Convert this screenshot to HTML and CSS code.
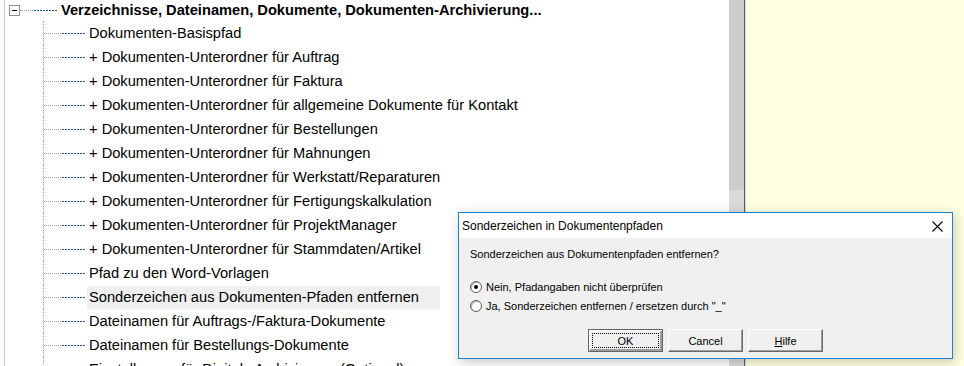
FILE: index.html
```html
<!DOCTYPE html>
<html lang="de">
<head>
    <meta charset="UTF-8">
    <title>Einstellungen</title>
    <link rel="stylesheet" href="styles.css">
</head>
<body>
    <div class="app">
        <div class="tree">
            <div class="head">
                <span class="toggle"></span>
                <span class="dots head-dots"></span>
                <span class="dash"></span>
                <span class="label bold">Verzeichnisse, Dateinamen, Dokumente, Dokumenten-Archivierung...</span>
            </div>
            <ul class="children">
                <li class="item"><span class="dots"></span><span class="dash"></span><span class="label">Dokumenten-Basispfad</span></li>
                <li class="item"><span class="dots"></span><span class="dash"></span><span class="label">+ Dokumenten-Unterordner für Auftrag</span></li>
                <li class="item"><span class="dots"></span><span class="dash"></span><span class="label">+ Dokumenten-Unterordner für Faktura</span></li>
                <li class="item"><span class="dots"></span><span class="dash"></span><span class="label">+ Dokumenten-Unterordner für allgemeine Dokumente für Kontakt</span></li>
                <li class="item"><span class="dots"></span><span class="dash"></span><span class="label">+ Dokumenten-Unterordner für Bestellungen</span></li>
                <li class="item"><span class="dots"></span><span class="dash"></span><span class="label">+ Dokumenten-Unterordner für Mahnungen</span></li>
                <li class="item"><span class="dots"></span><span class="dash"></span><span class="label">+ Dokumenten-Unterordner für Werkstatt/Reparaturen</span></li>
                <li class="item"><span class="dots"></span><span class="dash"></span><span class="label">+ Dokumenten-Unterordner für Fertigungskalkulation</span></li>
                <li class="item"><span class="dots"></span><span class="dash"></span><span class="label">+ Dokumenten-Unterordner für ProjektManager</span></li>
                <li class="item"><span class="dots"></span><span class="dash"></span><span class="label">+ Dokumenten-Unterordner für Stammdaten/Artikel</span></li>
                <li class="item"><span class="dots"></span><span class="dash"></span><span class="label">Pfad zu den Word-Vorlagen</span></li>
                <li class="item"><span class="dots"></span><span class="dash"></span><span class="label selected">Sonderzeichen aus Dokumenten-Pfaden entfernen</span></li>
                <li class="item"><span class="dots"></span><span class="dash"></span><span class="label">Dateinamen für Auftrags-/Faktura-Dokumente</span></li>
                <li class="item"><span class="dots"></span><span class="dash"></span><span class="label">Dateinamen für Bestellungs-Dokumente</span></li>
                <li class="item"><span class="dots"></span><span class="dash"></span><span class="label">Einstellungen für Digitale Archivierung (Optional)</span></li>
            </ul>
        </div>
        <div class="scrollbar"><div class="thumb"></div></div>
        <div class="side"></div>
    </div>

    <div class="dialog">
        <div class="titlebar">
            <span class="title">Sonderzeichen in Dokumentenpfaden</span>
            <svg class="close" width="11" height="11" viewBox="0 0 11 11">
                <path d="M0.5 0.5 L10.5 10.5 M10.5 0.5 L0.5 10.5" stroke="#000" stroke-width="1.1" fill="none"/>
            </svg>
        </div>
        <div class="dlg-body">
            <p class="question">Sonderzeichen aus Dokumentenpfaden entfernen?</p>
            <div class="options">
                <label class="option"><span class="radio checked"></span>Nein, Pfadangaben nicht überprüfen</label>
                <label class="option"><span class="radio"></span>Ja, Sonderzeichen entfernen / ersetzen durch "_"</label>
            </div>
            <div class="buttons">
                <button class="btn default"><span class="focus">OK</span></button>
                <button class="btn">Cancel</button>
                <button class="btn"><u>H</u>ilfe</button>
            </div>
        </div>
    </div>
</body>
</html>
```

FILE: styles.css
```css
body {
    margin: 0;
    font-family: "Liberation Sans", Arial, sans-serif;
    overflow: hidden;
}

.app {
    display: flex;
    height: 366px;
    overflow: hidden;
}

/* tree on the left */
.tree {
    width: 725px;
    padding-left: 4px;
    background: #fff;
    font-size: 14.67px;
    color: #000;
}

.head {
    display: flex;
    align-items: center;
    height: 21px;
    border-left: 1px solid #c8c8c8;
}

.toggle {
    position: relative;
    width: 9px;
    height: 9px;
    margin-left: 4px;
    border: 1px solid #919191;
    background: #fff;
}

.toggle::after {
    content: "";
    position: absolute;
    left: 2px;
    top: 4px;
    width: 5px;
    height: 1px;
    background: #000;
}

.dots {
    width: 18px;
    height: 1px;
    background: repeating-linear-gradient(to right, #a0a0a0 0 1px, transparent 1px 2px);
}

.head-dots {
    width: 14px;
}

.dash {
    width: 23px;
    height: 1px;
    background: repeating-linear-gradient(to right, #1f5a9c 0 2px, transparent 2px 3px);
}

.label {
    margin-left: 2px;
    padding: 0 2px;
    line-height: 23px;
    white-space: nowrap;
}

.bold {
    font-weight: bold;
}

.selected {
    background: #efefef;
    padding-right: 21px;
}

.children {
    list-style: none;
    margin: 0;
    padding: 0;
    border-left: 1px solid #c8c8c8;
}

.item {
    display: flex;
    align-items: center;
    height: 24px;
    margin-left: 38px;
    border-left: 1px dotted #a0a0a0;
}

/* scrollbar + yellow pane */
.scrollbar {
    width: 15px;
    background: #dadada;
}

.thumb {
    height: 190px;
    background: #cdcdcd;
}

.side {
    flex: 1;
    background: #ffffe1;
    border-left: 1px solid #5f5f5f;
    box-shadow: inset 1px 0 0 #d8d8d8;
}

/* message dialog */
.dialog {
    position: absolute;
    left: 458px;
    top: 212px;
    width: 493px;
    height: 145px;
    border: 1px solid #1883d7;
    background: #f0f0f0;
    box-shadow: 2px 3px 12px rgba(0, 0, 0, 0.22);
    display: flex;
    flex-direction: column;
}

.titlebar {
    display: flex;
    align-items: center;
    justify-content: space-between;
    height: 25px;
    padding: 0 9px 0 3px;
    background: #fff;
    font-size: 12px;
}

.close {
    margin-top: 1px;
}

.dlg-body {
    flex: 1;
    padding: 10px 11px 6px 11px;
    font-size: 11px;
    display: flex;
    flex-direction: column;
}

.question {
    margin: 0;
    line-height: 13px;
}

.options {
    margin-top: 16px;
}

.option {
    display: flex;
    align-items: center;
    height: 19px;
}

.radio {
    position: relative;
    width: 10px;
    height: 10px;
    margin-right: 4px;
    border: 1px solid #5c5c5c;
    border-radius: 50%;
    background: #fff;
    box-shadow: inset 1px 1px 0 #b4b4b4;
}

.radio.checked::after {
    content: "";
    position: absolute;
    left: 3px;
    top: 3px;
    width: 4px;
    height: 4px;
    border-radius: 50%;
    background: #000;
}

.buttons {
    display: flex;
    justify-content: center;
    gap: 5px;
    margin-top: auto;
}

.btn {
    width: 75px;
    height: 23px;
    padding: 0;
    font-family: "Liberation Sans", Arial, sans-serif;
    font-size: 11px;
    color: #000;
    background: #f0f0f0;
    border: 1px solid;
    border-color: #fff #696969 #696969 #fff;
    box-shadow: inset -1px -1px 0 #a0a0a0;
}

.btn.default {
    border: 1px solid #646464;
    box-shadow: inset 1px 1px 0 #fff, inset -2px -2px 0 #a0a0a0;
    display: flex;
    padding: 3px;
}

.focus {
    flex: 1;
    display: flex;
    align-items: center;
    justify-content: center;
    border: 1px dotted #000;
}
```
